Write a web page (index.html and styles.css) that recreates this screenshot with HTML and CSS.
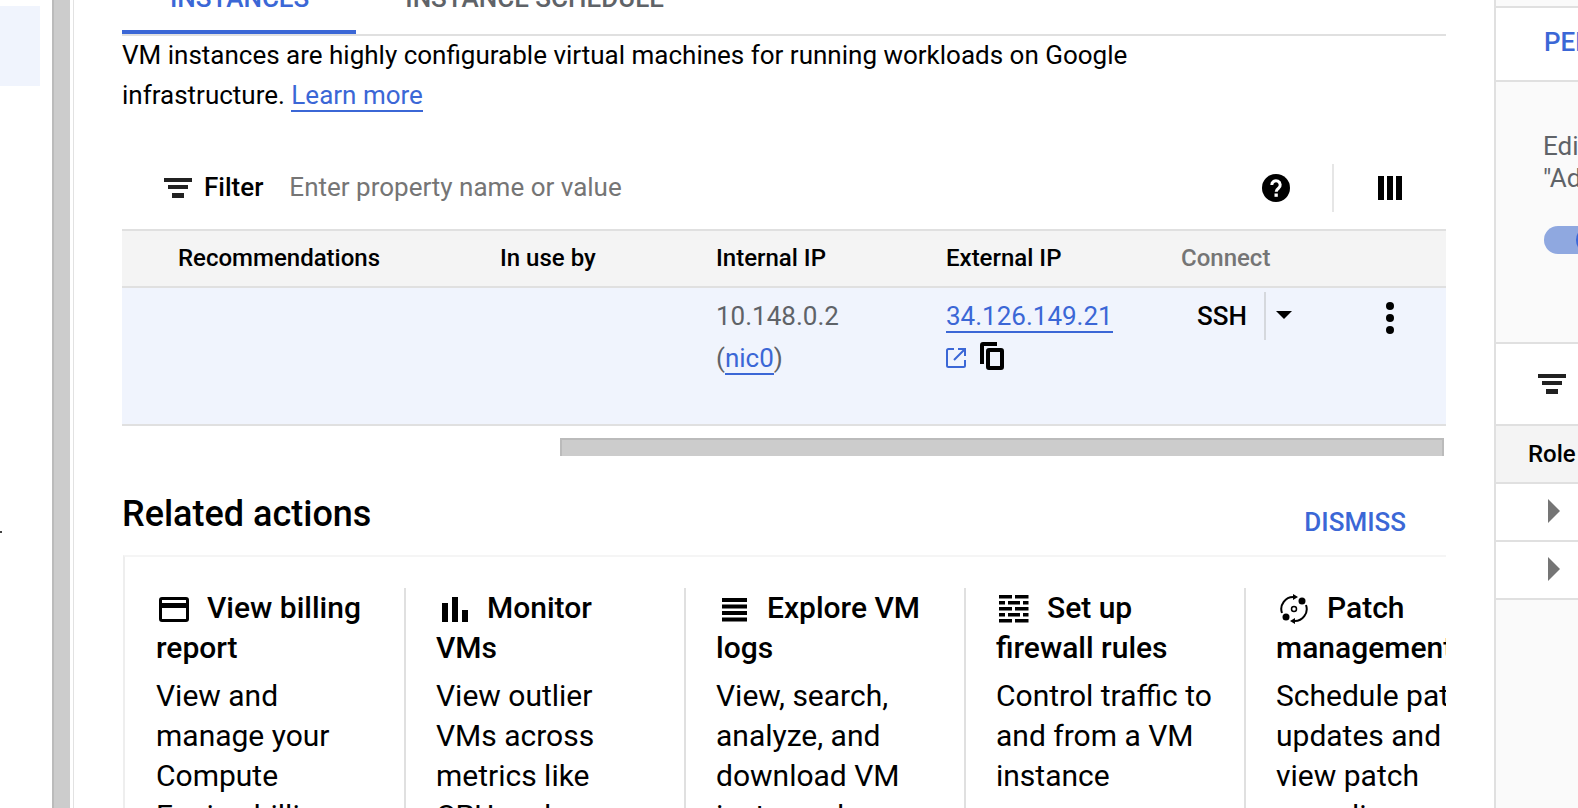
FILE: index.html
```html
<!DOCTYPE html>
<html lang="en">
  <head>
    <meta charset="UTF-8" />
    <meta name="viewport" content="width=device-width, initial-scale=1.0" />
    <title>VM instances</title>
    <link rel="stylesheet" href="styles.css">
  </head>
  <body>
    <div class="page">
      <div class="nav">
        <div class="nav-active"></div>
        <div class="nav-dot"></div>
      </div>
      <div class="page-scroll"></div>

      <div class="main">
        <div class="tabs">
          <div class="tab active">INSTANCES</div>
          <div class="tab second">INSTANCE SCHEDULE</div>
        </div>

        <p class="intro">
          VM instances are highly configurable virtual machines for running workloads on Google
          infrastructure. <a class="link" href="#">Learn more</a>
        </p>

        <div class="filter-bar">
          <svg class="filter-icon" viewBox="0 0 28 20"><path d="M0 0h28v4H0zM4 7h20v4H4zM8 15h12v5H8z" fill="#212121"/></svg>
          <span class="filter-label">Filter</span>
          <span class="filter-input">Enter property name or value</span>
          <svg class="help-icon" viewBox="0 0 28 28">
            <circle cx="14" cy="14" r="14" fill="#000"/>
            <path d="M9.800 11a4.200 4.200 0 1 1 6.700 3.300c-1.500 1.100-2.300 1.700-2.300 3.500" fill="none" stroke="#fff" stroke-width="3"/>
            <rect x="12.500" y="19.500" width="3.300" height="3.300" fill="#fff"/>
          </svg>
          <div class="bar-divider"></div>
          <svg class="columns-icon" viewBox="0 0 24 24"><path d="M0 0h6v24H0zM9 0h6v24H9zM18 0h6v24h-6z" fill="#000"/></svg>
        </div>

        <div class="table">
          <div class="table-row table-head">
            <div class="col-rec">Recommendations</div>
            <div class="col-use">In use by</div>
            <div class="col-int">Internal IP</div>
            <div class="col-ext">External IP</div>
            <div class="col-con muted">Connect</div>
          </div>
          <div class="table-row table-body">
            <div class="col-rec"></div>
            <div class="col-use"></div>
            <div class="col-int grey">10.148.0.2<br>(<a class="link" href="#">nic0</a>)</div>
            <div class="col-ext">
              <a class="link" href="#">34.126.149.21</a>
              <div class="ip-icons">
                <svg class="open-icon" viewBox="0 0 20 20"><path d="M8 1H2.500A1.500 1.500 0 0 0 1 2.500v15A1.500 1.500 0 0 0 2.500 19h15a1.500 1.500 0 0 0 1.500-1.500V12M12 1h7v7M19 1 8 12" fill="none" stroke="#3b67d6" stroke-width="2"/></svg>
                <svg class="copy-icon" viewBox="0 0 24 28"><path d="M2 22V3a1 1 0 0 1 1-1h14" fill="none" stroke="#000" stroke-width="4"/><rect x="8" y="8" width="14" height="18" rx="1" fill="none" stroke="#000" stroke-width="4"/></svg>
              </div>
            </div>
            <div class="col-con connect">
              <span class="ssh">SSH</span>
              <span class="ssh-sep"></span>
              <span class="caret"></span>
              <svg class="kebab" viewBox="0 0 8 32"><circle cx="4" cy="4" r="4"/><circle cx="4" cy="16" r="4"/><circle cx="4" cy="28" r="4"/></svg>
            </div>
          </div>
        </div>
        <div class="table-scroll"><div class="table-thumb"></div></div>

        <div class="related-head">
          <h2>Related actions</h2>
          <a class="dismiss" href="#">DISMISS</a>
        </div>

        <div class="cards">
          <div class="card">
            <h3><svg class="card-icon" viewBox="0 0 30 25"><path d="M3 0h24a3 3 0 0 1 3 3v19a3 3 0 0 1-3 3H3a3 3 0 0 1-3-3V3a3 3 0 0 1 3-3zm0 3v3h24V3zm0 8v11h24V11z" fill-rule="evenodd"/></svg>View billing report</h3>
            <p>View and manage your Compute Engine billing</p>
          </div>
          <div class="card">
            <h3><svg class="card-icon" viewBox="0 0 30 25"><path d="M3 6h6v19H3zM13 0h6v25h-6zM23 13h6v12h-6z"/></svg>Monitor VMs</h3>
            <p>View outlier VMs across metrics like CPU and</p>
          </div>
          <div class="card">
            <h3><svg class="card-icon" viewBox="0 0 30 25"><path d="M3 1h25v4H3zM3 7.500h25v4H3zM3 14h25v4H3zM3 20.500h25v4H3z"/></svg>Explore VM logs</h3>
            <p>View, search, analyze, and download VM instance logs</p>
          </div>
          <div class="card">
            <h3><svg class="card-icon tall" viewBox="0 0 30 30"><path d="M0 1h13v3.600H0zM16 1h13.500v3.600H16zM0 7h6v3.600H0zM9 7h12v3.600H9zM24 7h5.500v3.600H24zM0 13h13v3.600H0zM16 13h13.500v3.600H16zM0 19h6v3.600H0zM9 19h12v3.600H9zM24 19h5.500v3.600H24zM0 25h13v3.600H0zM16 25h13.500v3.600H16z"/></svg>Set up firewall rules</h3>
            <p>Control traffic to and from a VM instance</p>
          </div>
          <div class="card">
            <h3><svg class="card-icon tall" viewBox="0 0 30 30">
              <path d="M3 19A12 12 0 0 1 15 3M27 11A12 12 0 0 1 15 27" fill="none" stroke="#000" stroke-width="2"/>
              <path d="M14 0l5 3-5 3zM16 24l-5 3 5 3z"/>
              <circle cx="23" cy="7" r="3.500"/><circle cx="7" cy="23" r="3.500"/>
              <circle cx="15" cy="15" r="2.500" fill="none" stroke="#000" stroke-width="1.500"/>
            </svg>Patch management</h3>
            <p>Schedule patch updates and view patch compliance</p>
          </div>
        </div>
      </div>

      <div class="side">
        <div class="side-top"></div>
        <div class="side-tab">PERMISSIONS</div>
        <div class="side-info">
          <p>Edit access to<br>"Admin"</p>
          <div class="toggle"><div class="toggle-knob"></div></div>
        </div>
        <div class="side-filter">
          <svg class="filter-icon" viewBox="0 0 28 20"><path d="M0 0h28v4H0zM4 7h20v4H4zM8 15h12v5H8z" fill="#212121"/></svg>
        </div>
        <div class="side-head">Role</div>
        <div class="side-row"><span class="tri"></span><span class="row-label pale">Billing</span></div>
        <div class="side-row"><span class="tri"></span><span class="row-label">Compute</span></div>
      </div>
    </div>
  </body>
</html>
```

FILE: styles.css
```css
* {
  box-sizing: border-box;
}

html,
body {
  margin: 0;
  height: 100%;
  overflow: hidden;
}

body {
  font-family: Roboto, "Liberation Sans", sans-serif;
  font-size: 26px;
  color: #000;
  background: #fff;
}

.page {
  display: flex;
  width: 1578px;
  height: 808px;
  overflow: hidden;
}

.link {
  color: #3b67d6;
  text-decoration: none;
  border-bottom: 2px solid #3b67d6;
}

/* left nav, almost all cut off */
.nav {
  position: relative;
  flex: 0 0 52px;
  padding-top: 6px;
}

.nav-active {
  width: 40px;
  height: 80px;
  background: #f0f4fd;
}

.nav-dot {
  position: absolute;
  left: 0;
  top: 531px;
  width: 2px;
  height: 2px;
  background: #444;
}

.page-scroll {
  flex: 0 0 21px;
  background: #ccc;
  border-left: 2px solid #bbb;
  border-right: 3px solid #fff;
  box-shadow: inset -2px 0 0 #ccc, 1px 0 0 #e2e2e2;
}

/* main column */
.main {
  flex: 1;
  min-width: 0;
  padding: 0 48px 0 49px;
  overflow: hidden;
}

.tabs {
  display: flex;
  align-items: flex-end;
  height: 36px;
  border-bottom: 2px solid #e0e0e0;
  font-weight: 500;
  color: #5f6368;
}

.tab {
  flex: none;
  height: 64px;
  padding: 0 47px 0 48px;
  line-height: 57px;
  white-space: nowrap;
}

.tab.active {
  color: #3b67d6;
  border-bottom: 4px solid #3b67d6;
}

.tab.second {
  padding-left: 49px;
}

.intro {
  width: 1010px;
  height: 125px;
  margin: -1px 0 0;
  line-height: 40px;
}

.filter-bar {
  display: flex;
  align-items: center;
  height: 56px;
  margin-bottom: 13px;
  padding-left: 42px;
}

.filter-icon {
  width: 28px;
  height: 20px;
}

.filter-label {
  margin: -2px 0 0 12px;
  font-weight: 500;
}

.filter-input {
  flex: 1;
  margin: -2px 0 0 26px;
  color: #757575;
}

.help-icon {
  width: 28px;
  height: 28px;
}

.bar-divider {
  width: 2px;
  height: 48px;
  margin: 0 44px 0 42px;
  background: #e6e6e6;
}

.columns-icon {
  width: 24px;
  height: 24px;
  margin-right: 44px;
}

.table {
  border-top: 2px solid #e0e0e0;
  border-bottom: 2px solid #e0e0e0;
}

.table-row {
  display: flex;
  padding-left: 56px;
}

.table-head {
  height: 57px;
  padding-bottom: 2px;
  align-items: center;
  background: #f4f4f4;
  border-bottom: 2px solid #e0e0e0;
  font-size: 24px;
  font-weight: 500;
}

.table-body {
  height: 136px;
  background: #f0f4fd;
  line-height: 42px;
  padding-top: 7px;
}

.col-rec {
  width: 322px;
}

.col-use {
  width: 216px;
}

.col-int {
  width: 230px;
}

.col-ext {
  width: 235px;
}

.col-con {
  flex: 1;
}

.muted {
  color: #757575;
}

.grey {
  color: #5f6368;
}

.ip-icons {
  display: flex;
  align-items: flex-start;
  margin-top: 5px;
}

.open-icon {
  width: 20px;
  height: 20px;
  margin-top: 6px;
}

.copy-icon {
  width: 24px;
  height: 28px;
  margin-left: 14px;
}

.connect {
  display: flex;
  align-items: flex-start;
}

.ssh {
  margin-left: 16px;
  font-weight: 500;
}

.ssh-sep {
  width: 2px;
  height: 48px;
  margin-left: 17px;
  margin-top: -3px;
  background: #d5d8dd;
}

.caret {
  width: 0;
  height: 0;
  margin: 16px 0 0 10px;
  border-left: 8px solid transparent;
  border-right: 8px solid transparent;
  border-top: 8px solid #000;
}

.kebab {
  width: 8px;
  height: 32px;
  margin: 7px 0 0 94px;
}

.table-scroll {
  height: 18px;
  margin-top: 12px;
  padding-left: 438px;
}

.table-thumb {
  width: 884px;
  height: 18px;
  background: #ccc;
  border-top: 2px solid #bbb;
  border-right: 2px solid #bbb;
  border-left: 2px solid #bbb;
}

.related-head {
  display: flex;
  justify-content: space-between;
  align-items: center;
  height: 99px;
  padding-right: 40px;
}

.related-head h2 {
  margin: 16px 0 0;
  font-size: 36px;
  font-weight: 500;
}

.dismiss {
  margin-top: 32px;
  color: #3b67d6;
  font-weight: 500;
  text-decoration: none;
}

.cards {
  display: flex;
  height: 262px;
  margin-left: 1px;
  padding-top: 31px;
  overflow: hidden;
  border-top: 2px solid #f5f5f5;
  border-left: 2px solid #eee;
}

.card {
  flex: 0 0 280px;
  padding: 0 32px 0 30px;
  border-left: 2px solid #e0e0e0;
  font-size: 30px;
  line-height: 40px;
}

.card:first-child {
  flex-basis: 279px;
  padding-left: 31px;
  border-left: 0;
}

.card h3 {
  margin: 0 0 8px;
  font-size: 30px;
  font-weight: 500;
}

.card p {
  margin: 0;
}

.card-icon {
  display: inline-block;
  width: 30px;
  height: 25px;
  margin: 0 18px 0 3px;
  vertical-align: -4px;
}

.card-icon.tall {
  height: 30px;
  vertical-align: -6px;
}

/* right panel, cut off by the window */
.side {
  flex: 0 0 84px;
  min-width: 0;
  overflow: hidden;
  background: #fafafa;
  border-left: 2px solid #e0e0e0;
  white-space: nowrap;
}

.side-top {
  height: 8px;
  border-bottom: 2px solid #e0e0e0;
}

.side-tab {
  height: 74px;
  padding: 19px 0 0 48px;
  background: #fff;
  border-bottom: 2px solid #e0e0e0;
  color: #3b67d6;
  font-weight: 500;
}

.side-info {
  height: 262px;
  padding: 48px 0 0 47px;
  border-bottom: 2px solid #e0e0e0;
  color: #5f6368;
  line-height: 32px;
}

.side-info p {
  margin: 0;
}

.toggle {
  position: relative;
  width: 80px;
  height: 28px;
  margin: 32px 0 0 1px;
  border-radius: 14px;
  background: #8fa8e0;
}

.toggle-knob {
  position: absolute;
  left: 32px;
  top: 0;
  width: 28px;
  height: 28px;
  border-radius: 50%;
  background: #3b67d6;
}

.side-filter {
  display: flex;
  align-items: center;
  height: 82px;
  padding: 0 0 1px 42px;
  background: #fff;
  border-bottom: 2px solid #e0e0e0;
}

.side-head {
  height: 58px;
  padding: 14px 0 0 32px;
  background: #f4f4f4;
  border-bottom: 2px solid #e0e0e0;
  font-size: 24px;
  font-weight: 500;
}

.side-row {
  display: flex;
  align-items: center;
  height: 58px;
  padding: 0 0 2px 52px;
  background: #fff;
  border-bottom: 2px solid #e0e0e0;
}

.tri {
  flex: none;
  width: 0;
  height: 0;
  border-top: 12px solid transparent;
  border-bottom: 12px solid transparent;
  border-left: 12px solid #757575;
}

.row-label {
  margin-left: 17px;
  color: #5f6368;
}

.pale {
  color: #e8e8e8;
}
```
